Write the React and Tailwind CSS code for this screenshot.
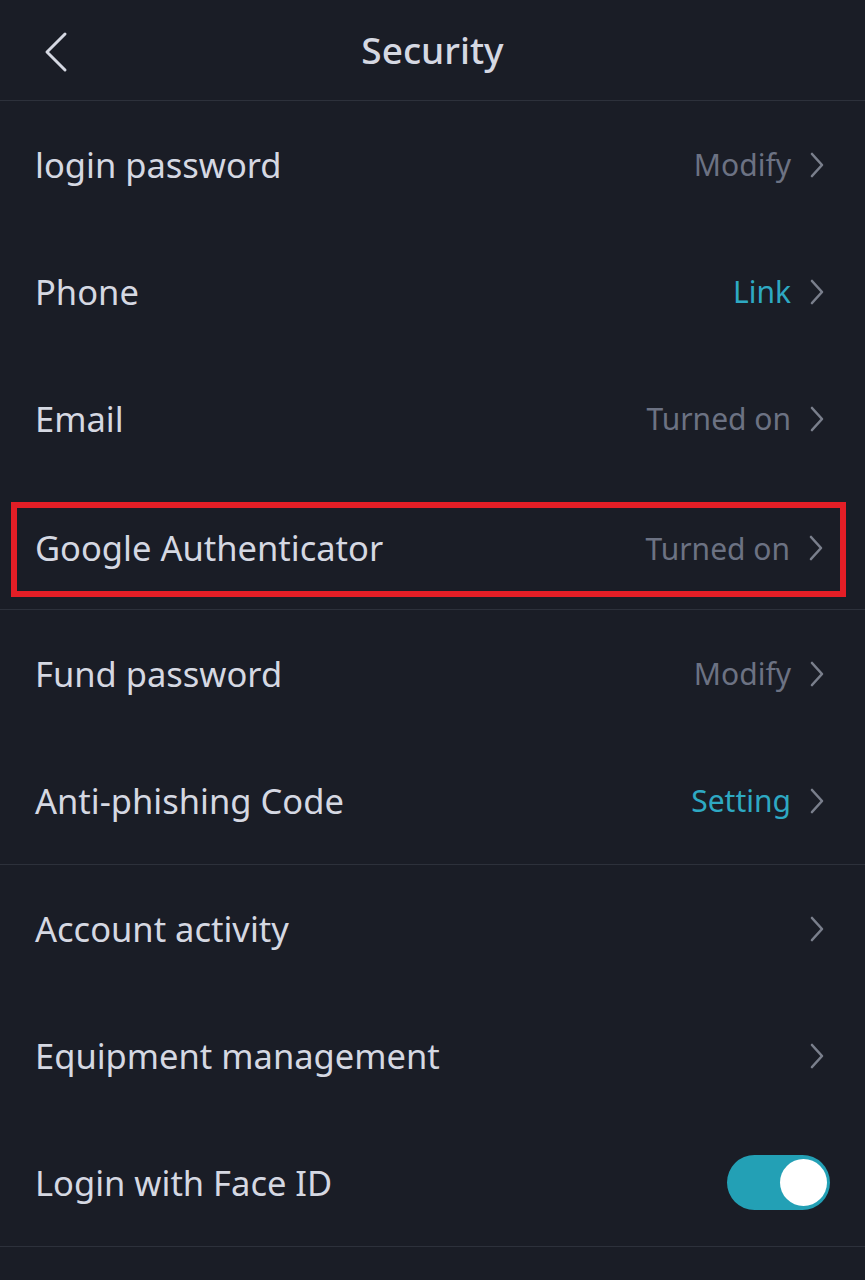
import React from "react";

function Chevron() {
  return (
    <svg width="16" height="28" viewBox="0 0 16 28" fill="none" className="shrink-0">
      <path d="M3 3l10 11L3 25" stroke="#7a7f8c" strokeWidth="2.6" strokeLinecap="round" strokeLinejoin="round" />
    </svg>
  );
}

function Row({ label, value, tone = "gray", toggle }) {
  return (
    <div className="h-[127px] flex items-center justify-between pl-[35px] pr-[40px]">
      <span className="text-[34.5px] text-[#d5d8e2]">{label}</span>
      {toggle ? (
        <div className="w-[103px] h-[55px] rounded-full bg-[#23a0b5] flex items-center justify-end pr-[3px] -mr-[5px]">
          <div className="w-[47px] h-[47px] rounded-full bg-white" />
        </div>
      ) : (
        <div className="flex items-center gap-[18px]">
          {value && (
            <span className={"text-[30px] " + (tone === "teal" ? "text-[#2ea9c3]" : "text-[#6c7283]")}>{value}</span>
          )}
          <Chevron />
        </div>
      )}
    </div>
  );
}

export default function App() {
  return (
    <div
      className="w-[865px] h-[1280px] bg-[#1a1d26] overflow-hidden"
      style={{ fontFamily: '"Noto Sans", "Open Sans", sans-serif' }}
    >
      <div className="h-[101px] relative flex items-center justify-center border-b border-[#2d313b]">
        <svg width="30" height="44" viewBox="0 0 30 44" fill="none" className="absolute left-[41px] top-[30px]">
          <path d="M24 4L6 22l18 18" stroke="#d5d8e2" strokeWidth="3" strokeLinecap="round" strokeLinejoin="round" />
        </svg>
        <span className="text-[37px] text-[#d5d8e2] font-medium">Security</span>
      </div>

      <div className="border-b border-[#2d313b]">
        <Row label="login password" value="Modify" />
        <Row label="Phone" value="Link" tone="teal" />
        <Row label="Email" value="Turned on" />
        <div className="h-[127px] flex flex-col justify-end pb-[12px] pl-[11px] pr-[19px]">
          <div className="w-full h-[95px] border-[6px] border-[#e41e26] flex items-center justify-between pl-[18px] pr-[16px] pb-[3px]">
            <span className="text-[34.5px] text-[#d5d8e2]">Google Authenticator</span>
            <div className="flex items-center gap-[18px]">
              <span className="text-[30px] text-[#6c7283]">Turned on</span>
              <Chevron />
            </div>
          </div>
        </div>
      </div>

      <div className="border-b border-[#2d313b]">
        <Row label="Fund password" value="Modify" />
        <Row label="Anti-phishing Code" value="Setting" tone="teal" />
      </div>

      <div className="border-b border-[#2d313b]">
        <Row label="Account activity" />
        <Row label="Equipment management" />
        <Row label="Login with Face ID" toggle />
      </div>
    </div>
  );
}
